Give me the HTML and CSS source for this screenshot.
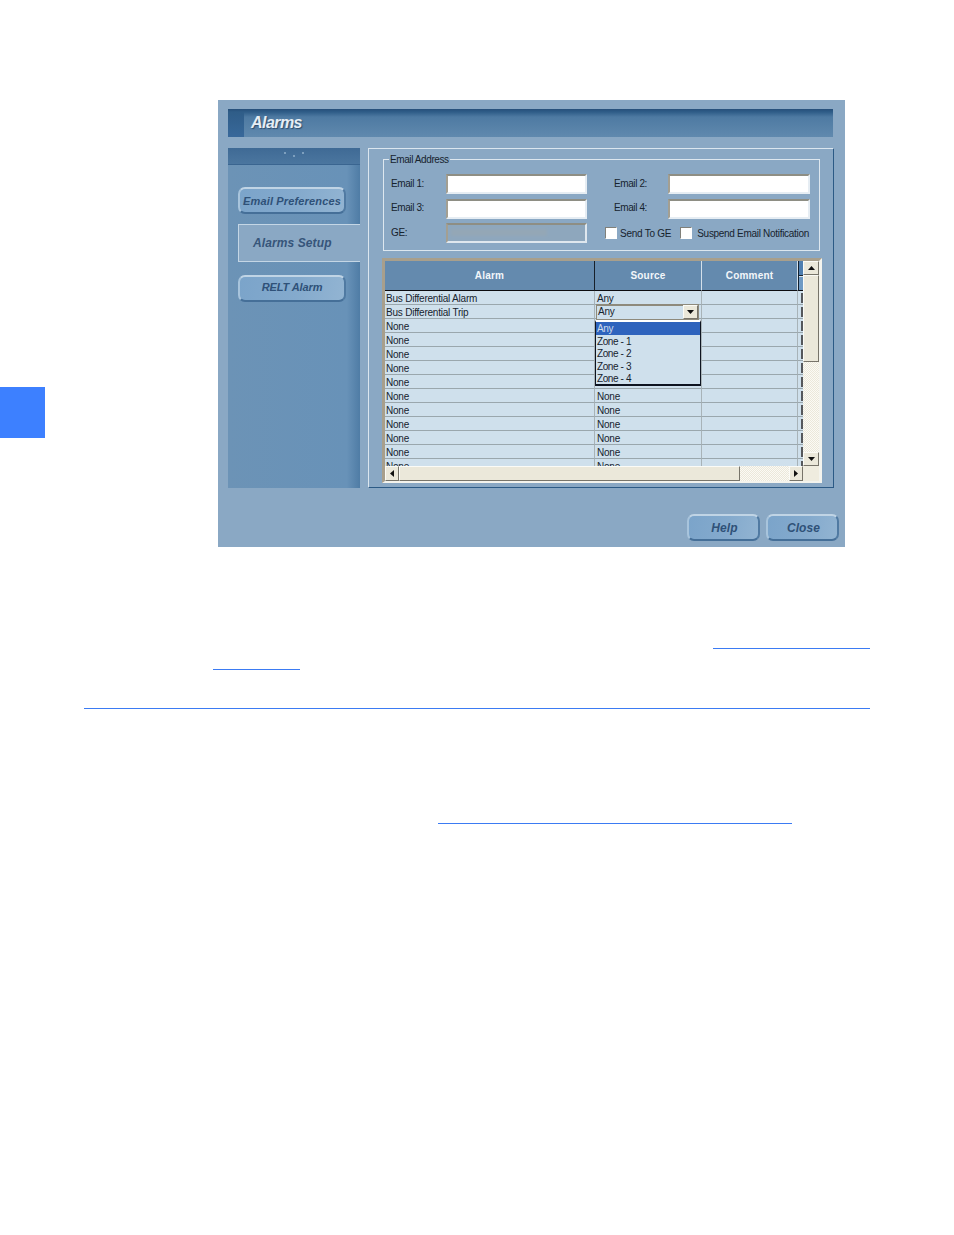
FILE: index.html
```html
<!DOCTYPE html>
<html lang="en">
<head>
<meta charset="utf-8">
<title>Alarms</title>
<link rel="stylesheet" href="styles.css">
</head>
<body>
<div class="page-tab"></div>
<section class="window">
  <header class="titlebar"><div class="title-block"></div><h1>Alarms</h1></header>
  <div class="body">
    <nav class="sidebar">
      <div class="side-band"><i></i><i></i><i></i></div>
      <button class="btn side-btn first">Email Preferences</button>
      <div class="side-tab">Alarms Setup</div>
      <button class="btn side-btn relt">RELT Alarm</button>
    </nav>
    <main class="main">
      <div class="group">
        <span class="legend">Email Address</span>
        <div class="email-grid">
          <label>Email 1:</label><span class="input"></span>
          <label class="right">Email 2:</label><span class="input"></span>
          <label>Email 3:</label><span class="input"></span>
          <label class="right">Email 4:</label><span class="input"></span>
          <label>GE:</label><span class="input disabled"><i class="smear"></i></span>
          <div class="checks">
            <span class="check"></span><span class="check-label first">Send To GE</span>
            <span class="check"></span><span class="check-label second">Suspend Email Notification</span>
          </div>
        </div>
      </div>
      <div class="table-frame">
        <div class="table-top">
          <div class="viewport">
            <table>
              <colgroup><col class="c1"><col class="c2"><col class="c3"><col class="c4"></colgroup>
              <thead><tr><th>Alarm</th><th>Source</th><th>Comment</th><th class="stub"></th></tr></thead>
              <tbody>
                <tr><td>Bus Differential Alarm</td><td class="src">Any</td><td></td><td class="stub"><i></i></td></tr>
                <tr><td>Bus Differential Trip</td><td></td><td></td><td class="stub"><i></i></td></tr>
                <tr><td>None</td><td></td><td></td><td class="stub"><i></i></td></tr>
                <tr><td>None</td><td></td><td></td><td class="stub"><i></i></td></tr>
                <tr><td>None</td><td></td><td></td><td class="stub"><i></i></td></tr>
                <tr><td>None</td><td></td><td></td><td class="stub"><i></i></td></tr>
                <tr><td>None</td><td class="src">None</td><td></td><td class="stub"><i></i></td></tr>
                <tr><td>None</td><td class="src">None</td><td></td><td class="stub"><i></i></td></tr>
                <tr><td>None</td><td class="src">None</td><td></td><td class="stub"><i></i></td></tr>
                <tr><td>None</td><td class="src">None</td><td></td><td class="stub"><i></i></td></tr>
                <tr><td>None</td><td class="src">None</td><td></td><td class="stub"><i></i></td></tr>
                <tr><td>None</td><td class="src">None</td><td></td><td class="stub"><i></i></td></tr>
                <tr><td>None</td><td class="src">None</td><td></td><td class="stub"><i></i></td></tr>
              </tbody>
            </table>
            <div class="combo"><span>Any</span><span class="sb-btn combo-btn"><svg viewBox="0 0 7 4" class="arrow-h"><path d="M0 0h7L3.500 4z"/></svg></span></div>
            <ul class="popup">
              <li class="sel">Any</li><li>Zone - 1</li><li>Zone - 2</li><li>Zone - 3</li><li>Zone - 4</li>
            </ul>
          </div>
          <div class="vscroll">
            <span class="sb-btn v"><svg viewBox="0 0 7 4" class="arrow-h"><path d="M0 4h7L3.500 0z"/></svg></span>
            <span class="sb-btn vthumb"></span>
            <span class="track"></span>
            <span class="sb-btn v"><svg viewBox="0 0 7 4" class="arrow-h"><path d="M0 0h7L3.500 4z"/></svg></span>
          </div>
        </div>
        <div class="hscroll">
          <span class="sb-btn h"><svg viewBox="0 0 4 7" class="arrow-v"><path d="M4 0v7L0 3.500z"/></svg></span>
          <span class="sb-btn hthumb"></span>
          <span class="track"></span>
          <span class="sb-btn h"><svg viewBox="0 0 4 7" class="arrow-v"><path d="M0 0v7L4 3.500z"/></svg></span>
        </div>
      </div>
    </main>
  </div>
  <footer class="footer">
    <button class="btn foot-btn">Help</button>
    <button class="btn foot-btn">Close</button>
  </footer>
</section>
<div class="line l1"></div>
<div class="line l2"></div>
<div class="line l3"></div>
<div class="line l4"></div>
</body>
</html>
```
FILE: styles.css
```css
* { box-sizing: border-box; }
html, body { margin: 0; padding: 0; background: #fff; }
body {
  position: relative;
  width: 954px;
  height: 1235px;
  overflow: hidden;
  padding-top: 100px;
  font-family: "Liberation Sans", Arial, sans-serif;
  font-size: 10px;
  color: #16232e;
}
.page-tab { position: absolute; left: 0; top: 387px; width: 45px; height: 51px; background: #3d80ff; }

.window {
  width: 627px;
  height: 447px;
  margin-left: 218px;
  padding: 9px 6px 0 10px;
  background: #8aa8c4;
  display: flex;
  flex-direction: column;
}
.titlebar {
  width: 605px;
  height: 28px;
  display: flex;
  align-items: center;
  background: linear-gradient(#264f7a 0, #2f5d88 3px, #4e7aa2 8px, #6089ae 100%);
}
.title-block { width: 16px; height: 100%; background: linear-gradient(#264f7a 0, #2f5d88 3px, #38689a 100%); }
.titlebar h1 {
  margin: 0 0 0 7px;
  font-size: 16px;
  font-weight: bold;
  font-style: italic;
  color: #e6eef5;
  letter-spacing: -0.55px;
  text-shadow: 1px 1px 1px #2d4c6b;
}
.body { display: flex; gap: 8px; height: 340px; margin-top: 11px; }

.sidebar {
  width: 132px;
  display: flex;
  flex-direction: column;
  background: linear-gradient(90deg, #6c93b6 0, #6892b8 90%, #4f7ca5 100%);
}
.side-band {
  height: 17px;
  background: linear-gradient(#3f6a95, #4b769f);
  border-bottom: 1px solid #3a6590;
  display: flex;
  justify-content: center;
  gap: 7px;
  padding-top: 4px;
}
.side-band i { width: 2px; height: 2px; background: #7d9fbe; }
.side-band i:nth-child(2) { margin-top: 3px; }
.btn {
  display: flex;
  align-items: center;
  justify-content: center;
  padding: 0;
  font-family: "Liberation Sans", Arial, sans-serif;
  font-weight: bold;
  font-style: italic;
  color: #2f5178;
  border: 2px solid #7fa3c4;
  border-top-color: #c0d4e5;
  border-left-color: #a8c4dc;
  border-bottom-color: #456f98;
  border-right-color: #507aa2;
  border-radius: 7px;
  background: linear-gradient(100deg, #7ba4ca, #84aacd 55%, #92b4d2);
}
.side-btn { width: 108px; height: 27px; margin-left: 10px; font-size: 11px; }
.side-btn.first { margin-top: 22px; letter-spacing: 0.15px; }
.side-btn.relt { margin-top: 13px; padding-bottom: 3px; letter-spacing: -0.1px; }
.side-tab {
  width: 122px;
  height: 38px;
  margin: 10px 0 0 10px;
  padding-left: 14px;
  display: flex;
  align-items: center;
  background: #8aa8c4;
  border-left: 1px solid #c4d6e5;
  border-top: 1px solid #c4d6e5;
  border-bottom: 1px solid #c4d6e5;
  font-size: 12px;
  font-weight: bold;
  font-style: italic;
  color: #36557a;
  letter-spacing: 0.1px;
}

.main {
  width: 466px;
  border: 1px solid;
  border-color: #dbe6ef #2c5a85 #2c5a85 #dbe6ef;
  padding: 10px 0 0 13px;
}
.group {
  position: relative;
  width: 437px;
  height: 92px;
  margin-left: 1px;
  padding: 14px 0 0 7px;
  border: 1px solid #dde7ef;
}
.legend {
  position: absolute;
  left: 5px;
  top: -6px;
  padding: 0 1px;
  background: #8aa8c4;
  line-height: 12px;
  letter-spacing: -0.4px;
}
.email-grid {
  display: grid;
  grid-template-columns: 55px 141px 81px 142px;
  grid-template-rows: 20px 20px 20px;
  row-gap: 4.5px;
  align-items: center;
}
.email-grid label { letter-spacing: -0.4px; padding-bottom: 2px; }
.email-grid label.right { padding-left: 27px; }
.input {
  display: block;
  height: 20px;
  background: #fff;
  border: 2px solid #fff;
  border-top-color: #8e8e84;
  border-left-color: #a39f92;
  border-bottom-color: #e6edf3;
  border-right-color: #e6edf3;
}
.input.disabled {
  padding: 4px 0 0 3px;
  background: #8ea7bd;
  border-bottom-color: #dfe7ee;
  border-right-color: #dfe7ee;
}
.smear {
  display: block;
  width: 96px;
  height: 7px;
  background: #98a7b3;
  opacity: 0.6;
  filter: blur(1px);
}
.checks { grid-column: 3 / 5; display: flex; align-items: center; margin-left: 18px; }
.check {
  flex: none;
  width: 12px;
  height: 12px;
  background: #fff;
  border: 1px solid #fff;
  border-top-color: #80807a;
  border-left-color: #80807a;
}
.check-label { white-space: nowrap; }
.check-label.first { margin: 0 9px 0 3px; letter-spacing: -0.25px; }
.check-label.second { margin-left: 5px; letter-spacing: -0.3px; }

.table-frame {
  width: 440px;
  height: 225px;
  margin-top: 7px;
  background: #efecdf;
  border: 3px solid;
  border-color: #a89f8c #f4f4ee #f4f4ee #a89f8c;
  border-bottom-width: 2px;
}
.table-top { display: flex; height: 205px; }
.viewport { position: relative; width: 418px; height: 205px; overflow: hidden; background: #cfe0ec; }
table { width: 418px; table-layout: fixed; border-collapse: separate; border-spacing: 0; }
.c1 { width: 210px; }
.c2 { width: 107px; }
.c3 { width: 96px; }
.c4 { width: 5px; }
th {
  height: 30px;
  padding: 0;
  background: #648aae;
  border-right: 1px solid #d4e0ea;
  border-bottom: 1px solid #0c0c10;
  color: #f2f6fa;
  font-size: 10px;
  font-weight: bold;
  letter-spacing: 0.2px;
}
th:first-child { border-right-color: #17202a; }
th.stub { border-right: 0; border-left: 1px solid #102030; background: linear-gradient(#4f7fb0 0, #4f7fb0 14px, #1a2430 14px, #1a2430 15px, #d8e4ee 15px, #d8e4ee 16px, #6f9ac4 16px); }
td {
  height: 14px;
  padding: 2px 0 0 1px;
  background: #cfe0ec;
  border-bottom: 1px solid #9aa7ad;
  border-right: 1px solid #a8b3b8;
  line-height: 11px;
  white-space: nowrap;
  overflow: hidden;
  vertical-align: top;
  letter-spacing: -0.22px;
}
td.src { padding-left: 2px; }
td.stub { padding: 0; border-right: 0; }
td.stub i { display: block; width: 2px; height: 10px; margin: 2px 0 0 3px; background: #55585c; }

.combo {
  position: absolute;
  left: 211px;
  top: 43px;
  width: 103px;
  height: 16px;
  padding: 0 0 2px 1px;
  display: flex;
  justify-content: space-between;
  align-items: center;
  background: #cfe0ec;
  border: 1px solid #8e8a7c;
  border-top-width: 2px;
  letter-spacing: -0.2px;
}
.combo-btn { width: 15px; height: 14px; }
.popup {
  position: absolute;
  left: 210px;
  top: 59px;
  width: 106px;
  height: 66px;
  margin: 0;
  padding: 0;
  list-style: none;
  background: #cfe0ec;
  border: 1px solid #0e1420;
  border-bottom-width: 2px;
  border-top: 2px solid #fff;
}
.popup li { height: 12.300px; line-height: 14px; padding-left: 1px; letter-spacing: -0.4px; }
.popup li.sel { background: #2e63bd; color: #cfdcec; height: 13px; }

.sb-btn {
  display: flex;
  align-items: center;
  justify-content: center;
  background: #ebe8da;
  border: 1px solid;
  border-color: #fbfbf6 #77746a #77746a #fbfbf6;
  flex: none;
}
.track {
  flex: 1;
  background-color: #f5f3ea;
  background-image: repeating-conic-gradient(#ebe8da 0 25%, #fbfaf5 0 50%);
  background-size: 2px 2px;
}
.vscroll { width: 16px; display: flex; flex-direction: column; }
.sb-btn.v { height: 14px; }
.sb-btn.vthumb { height: 87px; }
.hscroll { display: flex; height: 15px; width: 418px; }
.sb-btn.h { width: 14px; }
.sb-btn.hthumb { width: 341px; }
.arrow-h { width: 7px; height: 4px; fill: #101010; }
.arrow-v { width: 4px; height: 7px; fill: #101010; }

.footer { display: flex; justify-content: flex-end; gap: 6px; margin-top: 26px; }
.foot-btn { width: 73px; height: 27px; padding-left: 2px; font-size: 12px; letter-spacing: 0.1px; }

.line { height: 1px; background: #3b7bf3; }
.l1 { margin: 101px 0 0 713px; width: 157px; }
.l2 { margin: 20px 0 0 213px; width: 87px; }
.l3 { margin: 38px 0 0 84px; width: 786px; }
.l4 { margin: 114px 0 0 438px; width: 354px; }
```
